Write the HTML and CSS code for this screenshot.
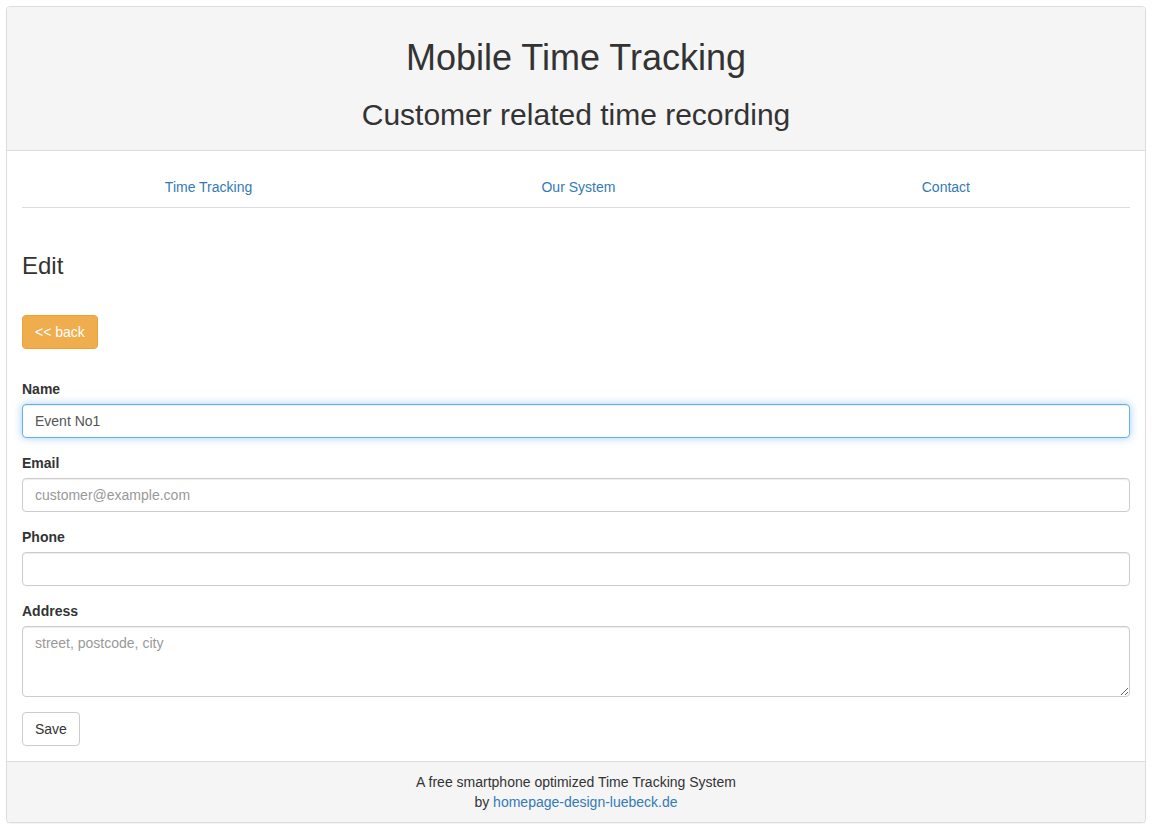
FILE: index.html
```html
<!DOCTYPE html>
<html lang="en">
<head>
    <meta charset="UTF-8">
    <title>Mobile Time Tracking - Edit</title>
    <link rel="stylesheet" href="styles.css">
</head>
<body>
    <div class="page">
        <div class="panel">
            <div class="panel-heading">
                <h1 class="site-title">Mobile Time Tracking</h1>
                <h2 class="site-subtitle">Customer related time recording</h2>
            </div>

            <div class="panel-body">
                <ul class="nav-tabs">
                    <li><a href="#">Time Tracking</a></li>
                    <li><a href="#">Our System</a></li>
                    <li><a href="#">Contact</a></li>
                </ul>

                <div class="tab-content">
                    <h3 class="page-title">Edit</h3>

                    <div class="back-row">
                        <a href="#" class="btn btn-warning">&lt;&lt; back</a>
                    </div>

                    <form class="edit-form">
                        <div class="form-group">
                            <label for="name">Name</label>
                            <input type="text" id="name" class="form-control is-focused" value="Event No1">
                        </div>
                        <div class="form-group">
                            <label for="email">Email</label>
                            <input type="email" id="email" class="form-control" placeholder="customer@example.com">
                        </div>
                        <div class="form-group">
                            <label for="phone">Phone</label>
                            <input type="text" id="phone" class="form-control">
                        </div>
                        <div class="form-group">
                            <label for="address">Address</label>
                            <textarea id="address" class="form-control" rows="3" placeholder="street, postcode, city"></textarea>
                        </div>
                        <button type="submit" class="btn btn-default">Save</button>
                    </form>
                </div>
            </div>

            <div class="panel-footer">
                A free smartphone optimized Time Tracking System<br>
                by <a href="#">homepage-design-luebeck.de</a>
            </div>
        </div>
    </div>
</body>
</html>
```

FILE: styles.css
```css
* {
    margin: 0;
    padding: 0;
    box-sizing: border-box;
}

body {
    font-family: "Liberation Sans", Arial, sans-serif;
    font-size: 14px;
    line-height: 20px;
    color: #333;
    background-color: white;
}

a {
    color: #337ab7;
    text-decoration: none;
}

a:hover {
    text-decoration: underline;
}

.page {
    padding: 6px 7px 10px 6px;
}

/* Panel */
.panel {
    border: 1px solid #ddd;
    border-radius: 4px;
    background-color: #fff;
    box-shadow: 0 1px 1px rgba(0, 0, 0, 0.05);
}

.panel-heading {
    padding: 10px 15px;
    background-color: #f5f5f5;
    border-bottom: 1px solid #ddd;
    border-radius: 3px 3px 0 0;
    text-align: center;
}

.site-title {
    font-size: 36px;
    font-weight: 500;
    line-height: 1.1;
    margin: 21px 0 9px;
}

.site-subtitle {
    font-size: 30px;
    font-weight: 500;
    line-height: 1.1;
    margin: 20px 0 9px;
}

.panel-body {
    padding: 16px 15px 15px;
}

/* Navigation */
.nav-tabs {
    list-style: none;
    display: table;
    width: 100%;
}

.nav-tabs li {
    display: table-cell;
    width: 1%;
    text-align: center;
}

.nav-tabs a {
    display: block;
    padding: 10px 15px;
    border-bottom: 1px solid #ddd;
}

.nav-tabs a:hover {
    text-decoration: none;
    background-color: #eee;
}

.tab-content {
    padding-top: 25px;
}

.page-title {
    font-size: 24px;
    font-weight: 500;
    line-height: 1.1;
    margin: 20px 0 10px;
}

.back-row {
    margin-top: 36px;
    margin-bottom: 30px;
}

/* Buttons */
.btn {
    display: inline-block;
    padding: 6px 12px;
    font-size: 14px;
    line-height: 20px;
    border: 1px solid transparent;
    border-radius: 4px;
    font-family: inherit;
    cursor: pointer;
}

.btn:hover {
    text-decoration: none;
}

.btn-warning {
    color: #fff;
    background-color: #f0ad4e;
    border-color: #eea236;
}

.btn-default {
    color: #333;
    background-color: #fff;
    border-color: #ccc;
}

/* Form */
.form-group {
    margin-bottom: 15px;
}

.form-group label {
    display: block;
    font-weight: bold;
    margin-bottom: 5px;
}

.form-control {
    display: block;
    width: 100%;
    height: 34px;
    padding: 6px 12px;
    font-family: inherit;
    font-size: 14px;
    line-height: 20px;
    color: #555;
    background-color: #fff;
    border: 1px solid #ccc;
    border-radius: 4px;
    box-shadow: inset 0 1px 1px rgba(0, 0, 0, 0.075);
}

.form-control::placeholder {
    color: #999;
}

textarea.form-control {
    height: 71px;
}

.form-control:focus,
.form-control.is-focused {
    border-color: #66afe9;
    outline: 0;
    box-shadow: inset 0 1px 1px rgba(0, 0, 0, 0.075), 0 0 8px rgba(102, 175, 233, 0.6);
}

/* Footer */
.panel-footer {
    padding: 10px 15px;
    background-color: #f5f5f5;
    border-top: 1px solid #ddd;
    border-radius: 0 0 3px 3px;
    text-align: center;
}
```
